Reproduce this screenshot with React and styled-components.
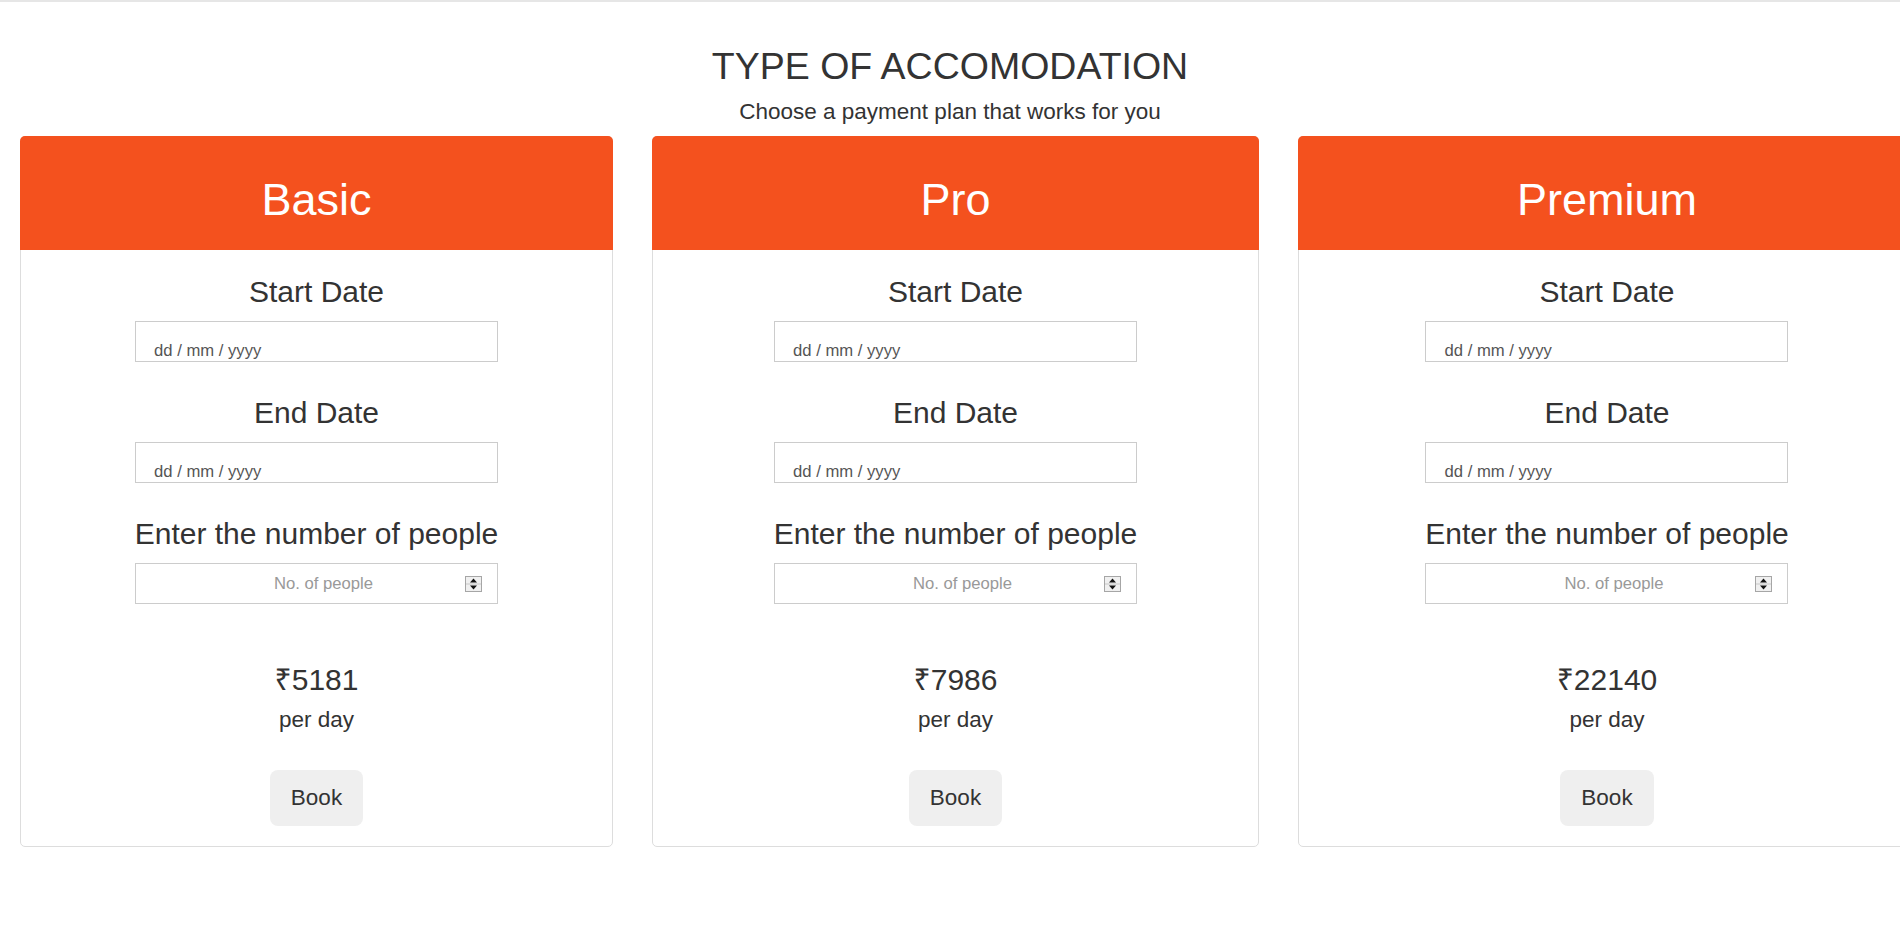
import React from "react";
import styled, { createGlobalStyle } from "styled-components";

const GlobalStyle = createGlobalStyle`
  html, body {
    margin: 0;
    padding: 0;
    background: #fff;
  }
  body {
    font-family: "Liberation Sans", Arial, "Noto Sans", sans-serif;
    color: #333;
  }
`;

const Page = styled.section`
  border-top: 2px solid #e6e6e6;
  padding-top: 44px;
  padding-bottom: 40px;
`;

const Title = styled.h2`
  margin: 0;
  font-size: 37.5px;
  font-weight: 400;
  line-height: 41px;
  text-align: center;
  color: #333;
`;

const Subtitle = styled.p`
  margin: 11px 0 0;
  font-size: 22.5px;
  line-height: 27px;
  text-align: center;
  color: #333;
`;

const Row = styled.div`
  display: flex;
  gap: 39px;
  padding: 11px 44px 0 20px;
  width: max-content;
`;

const Card = styled.div`
  flex: none;
  width: ${(p) => p.$w}px;
  box-sizing: border-box;
  border: 1px solid #ddd;
  border-radius: 5px;
  display: flex;
  flex-direction: column;
  align-items: center;
  text-align: center;
  padding-bottom: 20px;
`;

const Header = styled.div`
  align-self: stretch;
  margin: -1px -1px 0;
  background: #f4511e;
  color: #fff;
  font-size: 45px;
  line-height: 50px;
  padding: 39px 0 25px;
  border-radius: 5px 5px 0 0;
`;

const Body = styled.div`
  padding-top: 25px;
  display: flex;
  flex-direction: column;
  align-items: center;
`;

const Field = styled.div`
  display: flex;
  flex-direction: column;
  align-items: center;
  gap: 12px;
  & + & {
    margin-top: 34px;
  }
`;

const Label = styled.label`
  font-size: 30px;
  line-height: 34px;
  color: #333;
`;

const InputBase = styled.input`
  width: 363px;
  height: 41px;
  box-sizing: border-box;
  border: 1px solid #ccc;
  border-radius: 0;
  margin: 0;
  font-family: "Liberation Sans", Arial, sans-serif;
  font-size: 16.67px;
  line-height: 19px;
  outline: none;
  background: #fff;
`;

const DateInput = styled(InputBase)`
  padding: 19px 18px 1px;
  color: #555;
  &::placeholder {
    color: #555;
    opacity: 1;
  }
`;

const NumberWrap = styled.div`
  position: relative;
  width: 363px;
`;

const NumberInput = styled(InputBase)`
  padding: 0 12px 0 26px;
  text-align: center;
  color: #555;
  appearance: textfield;
  -moz-appearance: textfield;
  &::placeholder {
    color: #999;
    opacity: 1;
  }
  &::-webkit-inner-spin-button,
  &::-webkit-outer-spin-button {
    -webkit-appearance: none;
    margin: 0;
  }
`;

const Spinner = styled.svg`
  position: absolute;
  right: 16px;
  top: 50%;
  transform: translateY(-50%);
  display: block;
`;

const Price = styled.div`
  margin-top: 59px;
  font-size: 30px;
  line-height: 34px;
  color: #333;
`;

const PerDay = styled.div`
  margin-top: 10px;
  font-size: 22.5px;
  line-height: 26px;
  color: #333;
`;

const BookButton = styled.button`
  margin-top: 37px;
  padding: 15px 21px;
  font-family: "Liberation Sans", Arial, sans-serif;
  font-size: 22.5px;
  line-height: 26px;
  color: #333;
  background: #efefef;
  border: none;
  border-radius: 8px;
  cursor: pointer;
`;

const plans = [
  { name: "Basic", price: "5181", width: 593 },
  { name: "Pro", price: "7986", width: 607 },
  { name: "Premium", price: "22140", width: 618 },
];

function SpinIcon() {
  return (
    <Spinner width="17" height="16" viewBox="0 0 17 16">
      <rect x="0.5" y="0.5" width="16" height="15" fill="#f0f0f0" stroke="#a6a6a6" />
      <line x1="1" y1="8" x2="16" y2="8" stroke="#c8c8c8" />
      <polygon points="8.5,2.5 12,6.5 5,6.5" fill="#111" />
      <polygon points="8.5,13.5 12,9.5 5,9.5" fill="#111" />
    </Spinner>
  );
}

function PlanCard({ plan }) {
  return (
    <Card $w={plan.width}>
      <Header>{plan.name}</Header>
      <Body>
        <Field>
          <Label>Start Date</Label>
          <DateInput type="text" placeholder="dd / mm / yyyy" />
        </Field>
        <Field>
          <Label>End Date</Label>
          <DateInput type="text" placeholder="dd / mm / yyyy" />
        </Field>
        <Field>
          <Label>Enter the number of people</Label>
          <NumberWrap>
            <NumberInput type="number" placeholder="No. of people" />
            <SpinIcon />
          </NumberWrap>
        </Field>
      </Body>
      <Price>₹{plan.price}</Price>
      <PerDay>per day</PerDay>
      <BookButton type="button">Book</BookButton>
    </Card>
  );
}

export default function App() {
  return (
    <>
      <GlobalStyle />
      <Page>
        <Title>TYPE OF ACCOMODATION</Title>
        <Subtitle>Choose a payment plan that works for you</Subtitle>
        <Row>
          {plans.map((p) => (
            <PlanCard key={p.name} plan={p} />
          ))}
        </Row>
      </Page>
    </>
  );
}
